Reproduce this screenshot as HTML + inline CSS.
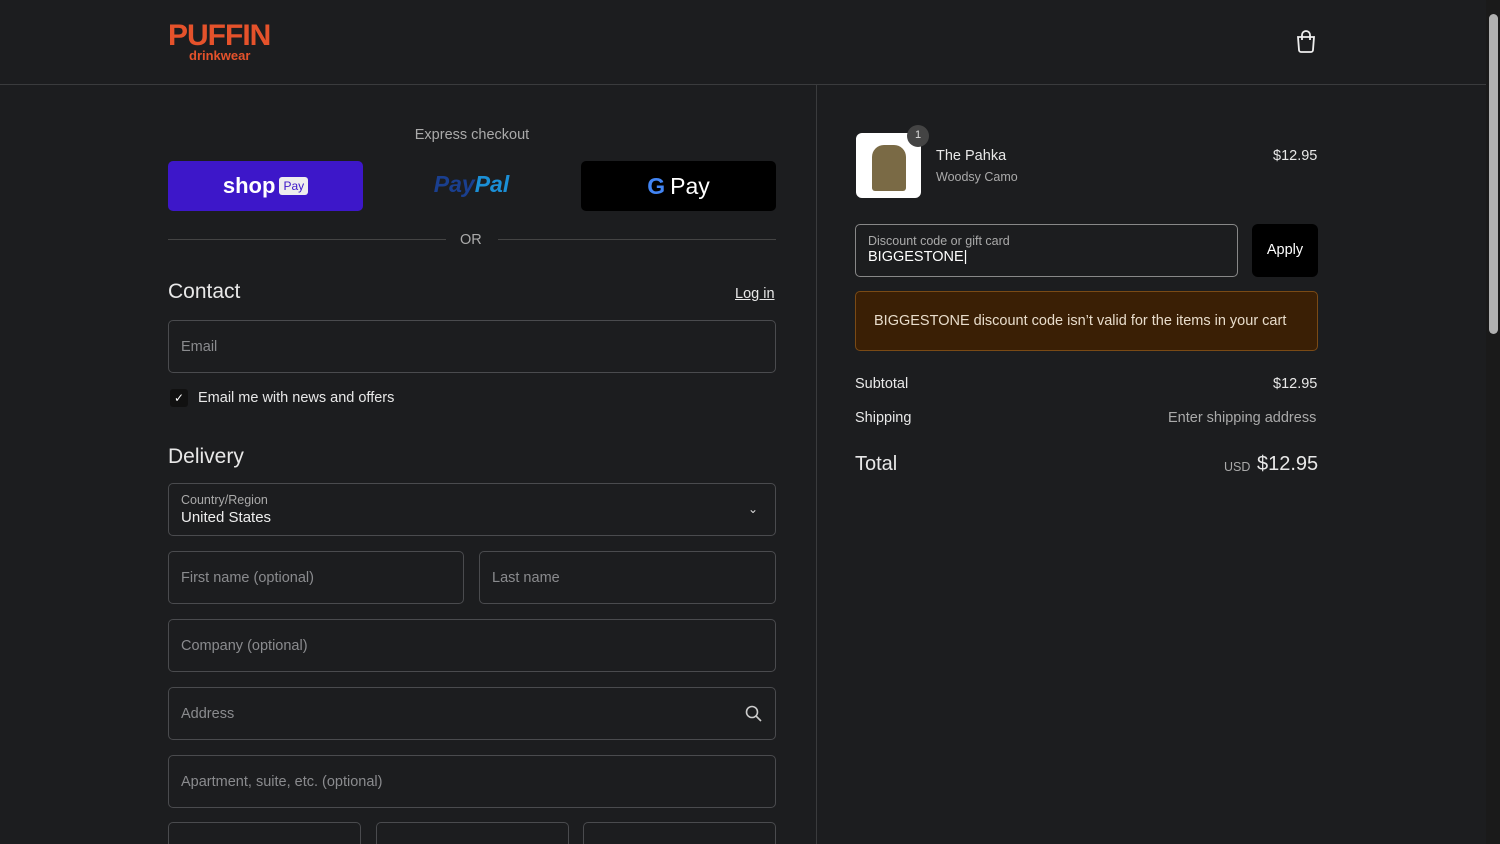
<!DOCTYPE html>
<html style="height:844px;overflow:hidden"><head><style>
*{box-sizing:border-box;margin:0;padding:0}
body{width:1500px;height:844px;overflow:hidden;background:#1c1d1f;font-family:"Liberation Sans",sans-serif;color:#e8e8e8;position:relative}
.a{position:absolute}
.hdr{left:0;top:0;width:1486px;height:85px;border-bottom:1px solid #3a3b3d;background:#1c1d1f}
.inp{position:absolute;border:1px solid #4a4b4e;border-radius:5px;background:#1c1d1f;height:53px;color:#8a8b8e;font-size:14.5px;padding:0 12px;display:flex;align-items:center}
.lbl{font-size:12.5px;color:#aaa}
</style></head><body>
<div class="a hdr"></div>
<div class="a" style="left:168px;top:18px;color:#e5522b;font-weight:900;font-size:30px;letter-spacing:-1px;line-height:36px">PUFFIN</div>
<div class="a" style="left:189px;top:48px;color:#e5522b;font-weight:bold;font-size:13px">drinkwear</div>
<svg class="a" style="left:1295px;top:29px" width="22" height="24" viewBox="0 0 22 24" fill="none" stroke="#eee" stroke-width="1.8"><path d="M3 8h16l-1 13a2 2 0 0 1-2 2H6a2 2 0 0 1-2-2z"/><path d="M7 11V6a4 4 0 0 1 8 0v5"/></svg>
<div class="a" style="left:816px;top:85px;width:1px;height:759px;background:#3a3b3d"></div>
<div class="a" style="left:1486px;top:0;width:14px;height:844px;background:#1a1a1a"></div>
<div class="a" style="left:1489px;top:14px;width:9px;height:320px;background:#b0b0b0;border-radius:5px"></div>

<div class="a" style="left:168px;top:127px;width:608px;text-align:center;font-size:14.5px;color:#aaa">Express checkout</div>
<div class="a" style="left:168px;top:161px;width:195px;height:50px;background:#3d17c9;border-radius:5px;display:flex;align-items:center;justify-content:center;gap:4px"><span style="color:#fff;font-weight:bold;font-size:22px">shop</span><span style="background:#eee;color:#3d17c9;font-size:12px;border-radius:3px;padding:2px 4px">Pay</span></div>
<div class="a" style="left:374px;top:171px;width:195px;text-align:center;font-weight:bold;font-style:italic;font-size:23px"><span style="color:#1a3f8f">Pay</span><span style="color:#1b8fd6">Pal</span></div>
<div class="a" style="left:581px;top:161px;width:195px;height:50px;background:#000;border-radius:5px;display:flex;align-items:center;justify-content:center;font-size:23px;color:#fff"><b style="color:#4285f4;margin-right:5px">G</b>Pay</div>
<div class="a" style="left:168px;top:239px;width:278px;height:1px;background:#444"></div>
<div class="a" style="left:498px;top:239px;width:278px;height:1px;background:#444"></div>
<div class="a" style="left:460px;top:232px;font-size:14.5px;color:#aaa">OR</div>

<div class="a" style="left:168px;top:280px;font-size:21px">Contact</div>
<div class="a" style="left:735px;top:286px;font-size:14.5px;text-decoration:underline">Log in</div>
<div class="inp" style="left:168px;top:320px;width:608px">Email</div>
<div class="a" style="left:170px;top:389px;width:18px;height:18px;background:#111;border-radius:3px;color:#fff;font-size:12px;text-align:center;line-height:18px">✓</div>
<div class="a" style="left:198px;top:390px;font-size:14.5px">Email me with news and offers</div>

<div class="a" style="left:168px;top:445px;font-size:21px">Delivery</div>
<div class="inp" style="left:168px;top:483px;width:608px;display:block;padding-top:9px"><div class="lbl">Country/Region</div><div style="color:#eee;font-size:15px;margin-top:2px">United States</div></div>
<div class="a" style="left:748px;top:502px;font-size:12px;color:#ddd">⌄</div>
<div class="inp" style="left:168px;top:551px;width:296px">First name (optional)</div>
<div class="inp" style="left:479px;top:551px;width:297px">Last name</div>
<div class="inp" style="left:168px;top:619px;width:608px">Company (optional)</div>
<div class="inp" style="left:168px;top:687px;width:608px">Address</div>
<svg class="a" style="left:745px;top:705px" width="17" height="17" fill="none" stroke="#ccc" stroke-width="1.6"><circle cx="7" cy="7" r="5.5"/><path d="M11 11l5 5"/></svg>
<div class="inp" style="left:168px;top:755px;width:608px">Apartment, suite, etc. (optional)</div>
<div class="inp" style="left:168px;top:822px;width:193px;height:22px;border-bottom:none;border-radius:5px 5px 0 0"></div>
<div class="inp" style="left:376px;top:822px;width:193px;height:22px;border-bottom:none;border-radius:5px 5px 0 0"></div>
<div class="inp" style="left:583px;top:822px;width:193px;height:22px;border-bottom:none;border-radius:5px 5px 0 0"></div>

<div class="a" style="left:856px;top:133px;width:65px;height:65px;background:#fff;border-radius:6px;overflow:hidden"><div style="margin:12px auto;width:34px;height:46px;background:#7a6a45;border-radius:12px 12px 3px 3px"></div></div>
<div class="a" style="left:907px;top:125px;width:22px;height:22px;border-radius:50%;background:#444;color:#ddd;font-size:11px;text-align:center;line-height:20px">1</div>
<div class="a" style="left:936px;top:148px;font-size:14.5px">The Pahka</div>
<div class="a" style="left:936px;top:170px;font-size:12.5px;color:#aaa">Woodsy Camo</div>
<div class="a" style="left:1273px;top:148px;font-size:14.5px">$12.95</div>
<div class="inp" style="left:855px;top:224px;width:383px;display:block;padding-top:9px;border-color:#888"><div class="lbl">Discount code or gift card</div><div style="color:#fff;font-size:14.5px;margin-top:1px">BIGGESTONE|</div></div>
<div class="a" style="left:1252px;top:224px;width:66px;height:53px;background:#000;border-radius:6px;text-align:center;line-height:53px;font-size:14.5px;color:#fff">Apply</div>
<div class="a" style="left:855px;top:291px;width:463px;height:60px;background:#3a1f05;border:1px solid #7a4a15;border-radius:5px;padding:0 18px;line-height:58px;font-size:14.5px;color:#e8dccb">BIGGESTONE discount code isn’t valid for the items in your cart</div>
<div class="a" style="left:855px;top:376px;font-size:14.5px">Subtotal</div>
<div class="a" style="left:1273px;top:376px;font-size:14.5px">$12.95</div>
<div class="a" style="left:855px;top:410px;font-size:14.5px">Shipping</div>
<div class="a" style="left:1168px;top:410px;font-size:14.5px;color:#aaa">Enter shipping address</div>
<div class="a" style="left:855px;top:453px;font-size:20px">Total</div>
<div class="a" style="left:1224px;top:460px;font-size:12.5px;color:#aaa">USD</div>
<div class="a" style="left:1257px;top:453px;font-size:20px">$12.95</div>
</body></html>
